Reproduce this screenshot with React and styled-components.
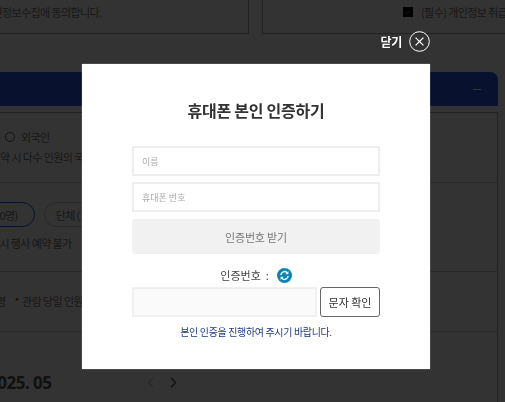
import React from 'react';
import styled, { createGlobalStyle } from 'styled-components';
import { FiChevronLeft, FiChevronRight } from 'react-icons/fi';

const FONT = `"Noto Sans CJK KR", "Noto Sans", "Liberation Sans", sans-serif`;

const GlobalStyle = createGlobalStyle`
  html, body {
    margin: 0;
    padding: 0;
    height: 100%;
    overflow: hidden;
    background: #fff;
    font-family: ${FONT};
  }
  * {
    box-sizing: border-box;
  }
`;

const Page = styled.div`
  width: 505px;
  height: 402px;
  overflow: hidden;
  background: #fff;
  color: #777;
`;

const AgreeRow = styled.div`
  display: flex;
  gap: 13px;
  margin-left: -60px;
  width: 640px;
`;

const AgreeBox = styled.div`
  flex: 0 0 ${(p) => p.$width}px;
  height: 35px;
  margin-top: -1px;
  padding-bottom: 10px;
  padding-left: ${(p) => p.$inset}px;
  border: 1px solid #aaa;
  display: flex;
  align-items: center;
  gap: 8px;
  font-size: 11px;
  letter-spacing: -0.6px;
  white-space: nowrap;
  overflow: hidden;
`;

const Tick = styled.span`
  width: 10px;
  height: 10px;
  background: #111;
  flex: none;
  display: flex;
`;

const Bar = styled.div`
  margin-top: 38px;
  width: 498px;
  height: 34px;
  background: #2a5ae6;
  border-top-right-radius: 8px;
  display: flex;
  align-items: center;
  justify-content: flex-end;
  padding-right: 17px;
`;

const Dash = styled.span`
  width: 8px;
  height: 1px;
  background: #fff;
`;

const Panel = styled.div`
  margin-top: 6px;
  width: 498px;
  height: 290px;
  border-right: 1px solid #aaa;
  border-top: 1px solid #aaa;
`;

const Section = styled.div`
  height: ${(p) => p.$height}px;
  padding-top: ${(p) => p.$top}px;
  border-bottom: ${(p) => (p.$plain ? 'none' : '1px solid #ccc')};
  font-size: 11px;
  letter-spacing: -0.6px;
  white-space: nowrap;
`;

const RadioLine = styled.div`
  display: flex;
  align-items: center;
  gap: 6px;
  padding-left: 5px;
  line-height: 14px;
`;

const Radio = styled.span`
  width: 10px;
  height: 10px;
  border: 1px solid #555;
  border-radius: 50%;
`;

const Note = styled.div`
  margin-top: ${(p) => p.$gap}px;
  margin-left: ${(p) => p.$shift || 0}px;
  line-height: 14px;
`;

const Pills = styled.div`
  display: flex;
  gap: 9px;
  margin-left: -58px;
`;

const Pill = styled.div`
  height: 25px;
  padding: 0 ${(p) => p.$pad}px;
  border: 1px solid ${(p) => (p.$active ? '#2a5ae6' : '#ccc')};
  border-radius: 13px;
  display: flex;
  align-items: center;
`;

const Red = styled.span`
  color: #c02020;
  margin: 0 3px 0 9px;
`;

const MonthRow = styled.div`
  display: flex;
  align-items: center;
  margin-top: 39px;
  margin-left: -12px;
`;

const Month = styled.div`
  width: 154px;
  font-size: 17px;
  font-weight: 700;
  font-family: "Noto Sans", sans-serif;
  letter-spacing: -0.5px;
  color: #555;
`;

const MonthNav = styled.span`
  display: flex;
  font-size: 17px;
  width: 23px;
  color: ${(p) => (p.$off ? '#ccc' : '#555')};
`;

const Overlay = styled.div`
  position: fixed;
  inset: 0;
  background: rgba(0, 0, 0, 0.8);
  display: flex;
  justify-content: center;
  padding: 30px 0 0 7px;
`;

const Dialog = styled.div`
  width: 348px;
  display: flex;
  flex-direction: column;
  align-items: stretch;
`;

const CloseButton = styled.button`
  align-self: flex-end;
  height: 22px;
  margin-bottom: 12px;
  padding: 0;
  border: 0;
  background: none;
  display: flex;
  align-items: center;
  gap: 7px;
  color: #fff;
  font-family: ${FONT};
  font-size: 12px;
  font-weight: 700;
  letter-spacing: -0.3px;
`;

const Modal = styled.div`
  height: 305px;
  background: #fff;
  padding: 34px 50px 0;
  box-shadow: 0 0 1px rgba(255, 255, 255, 0.6);
`;

const Title = styled.h2`
  margin: 0 0 24px;
  font-size: 16px;
  line-height: 24px;
  font-weight: 700;
  text-align: center;
  letter-spacing: -0.25px;
  color: #333;
`;

const Field = styled.input`
  display: block;
  width: 100%;
  height: 30px;
  margin-bottom: 6px;
  padding: 0 8px;
  border: 2px solid #eee;
  outline: none;
  font-family: ${FONT};
  font-size: 9px;
  &::placeholder {
    color: #aaa;
  }
`;

const SendButton = styled.button`
  display: block;
  width: 100%;
  height: 35px;
  margin-top: 7px;
  border: 0;
  border-radius: 3px;
  background: #f1f1f1;
  color: #777;
  font-family: ${FONT};
  font-size: 11px;
  letter-spacing: -0.2px;
`;

const CodeLabel = styled.div`
  margin-top: 10px;
  height: 22px;
  display: flex;
  align-items: center;
  justify-content: center;
  gap: 8px;
  font-size: 11px;
  color: #444;
  white-space: pre;
`;

const CodeRow = styled.div`
  display: flex;
  gap: 3px;
  margin-top: 1px;
`;

const CodeInput = styled.input`
  width: 185px;
  height: 30px;
  border: 2px solid #f0f0f0;
  background: #fafafa;
  outline: none;
`;

const CheckButton = styled.button`
  width: 60px;
  height: 30px;
  padding: 0;
  border: 1px solid #666;
  border-radius: 3px;
  background: #fff;
  color: #333;
  font-family: ${FONT};
  font-size: 11px;
`;

const Guide = styled.p`
  margin: 8px 0 0;
  font-size: 10px;
  line-height: 14px;
  text-align: center;
  letter-spacing: -0.35px;
  color: #1f3a7a;
`;

function CloseIcon() {
  return (
    <svg width="21" height="21" viewBox="0 0 21 21" fill="none" stroke="#fff">
      <circle cx="10.5" cy="10.5" r="9.8" strokeWidth="1" />
      <path d="M6.6 6.6l7.8 7.8M14.4 6.6l-7.8 7.8" strokeWidth="1.3" />
    </svg>
  );
}

function RefreshIcon() {
  return (
    <svg width="15" height="15" viewBox="0 0 15 15">
      <circle cx="7.5" cy="7.5" r="7.5" fill="#0a84b4" />
      <path d="M3.9 7a3.7 3.7 0 0 1 6.3-2.3" fill="none" stroke="#fff" strokeWidth="1.5" />
      <path d="M11.1 8a3.7 3.7 0 0 1-6.3 2.3" fill="none" stroke="#fff" strokeWidth="1.5" />
      <path d="M11.4 3.2v3h-3zM3.6 11.8v-3h3z" fill="#fff" />
    </svg>
  );
}

function TickMark() {
  return (
    <svg width="10" height="10" viewBox="0 0 10 10" fill="none" stroke="#666" strokeWidth="1">
      <path d="M2.8 5l1.6 1.6 2.8-3" />
    </svg>
  );
}

export default function App() {
  return (
    <>
      <GlobalStyle />
      <Page>
        <AgreeRow>
          <AgreeBox $width={309} $inset={42}>개인정보수집에 동의합니다.</AgreeBox>
          <AgreeBox $width={318} $inset={140}>
            <Tick>
              <TickMark />
            </Tick>
            (필수) 개인정보 취급방침
          </AgreeBox>
        </AgreeRow>
        <Bar>
          <Dash />
        </Bar>
        <Panel>
          <Section $height={70} $top={17}>
            <RadioLine>
              <Radio />
              외국인
            </RadioLine>
            <Note $gap={6}>약 시 다수 인원의 국적을</Note>
          </Section>
          <Section $height={89} $top={19}>
            <Pills>
              <Pill $active $pad={16}>개인 (1~10명)</Pill>
              <Pill $pad={11}>단체 (11명 이상)</Pill>
            </Pills>
            <Note $gap={9} $shift={-7}>* 시 행사 예약 불가</Note>
          </Section>
          <Section $height={60} $top={22}>
            <Note $gap={0} $shift={-4}>
              명<Red>*</Red>관람 당일 인원 추가
            </Note>
          </Section>
          <Section $plain $height={60} $top={0}>
            <MonthRow>
              <Month>2025. 05</Month>
              <MonthNav $off>
                <FiChevronLeft />
              </MonthNav>
              <MonthNav>
                <FiChevronRight />
              </MonthNav>
            </MonthRow>
          </Section>
        </Panel>
      </Page>
      <Overlay>
        <Dialog>
          <CloseButton type="button">
            닫기
            <CloseIcon />
          </CloseButton>
          <Modal>
            <Title>휴대폰 본인 인증하기</Title>
            <Field placeholder="이름" />
            <Field placeholder="휴대폰 번호" />
            <SendButton type="button">인증번호 받기</SendButton>
            <CodeLabel>
              인증번호  :
              <RefreshIcon />
            </CodeLabel>
            <CodeRow>
              <CodeInput />
              <CheckButton type="button">문자 확인</CheckButton>
            </CodeRow>
            <Guide>본인 인증을 진행하여 주시기 바랍니다.</Guide>
          </Modal>
        </Dialog>
      </Overlay>
    </>
  );
}
